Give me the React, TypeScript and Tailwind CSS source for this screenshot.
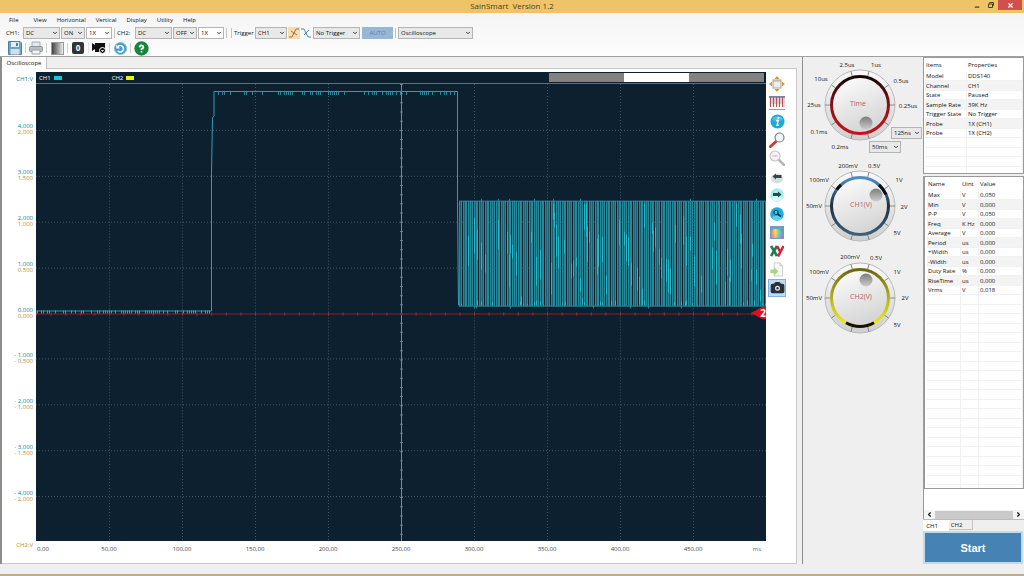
import { useState } from 'react';
import type { ReactNode } from 'react';
import {
  Camera,
  ChevronDown,
  ChevronLeft,
  ChevronRight,
  CircleHelp,
  Minus,
  X,
} from 'lucide-react';

const MENU = ['File', 'View', 'Horizontal', 'Vertical', 'Display', 'Utility', 'Help'];

const ITEMS = [
  ['Model', 'DDS140'],
  ['Channel', 'CH1'],
  ['State', 'Paused'],
  ['Sample Rate', '39K Hz'],
  ['Trigger State', 'No Trigger'],
  ['Probe', '1X (CH1)'],
  ['Probe', '1X (CH2)'],
];

const MEASUREMENTS = [
  ['Max', 'V', '0,050'],
  ['Min', 'V', '0,000'],
  ['P-P', 'V', '0,050'],
  ['Freq', 'K Hz', '0,000'],
  ['Average', 'V', '0,000'],
  ['Period', 'us', '0,000'],
  ['+Width', 'us', '0,000'],
  ['-Width', 'us', '0,000'],
  ['Duty Rate', '%', '0,000'],
  ['RiseTime', 'us', '0,000'],
  ['Vrms', 'V', '0,018'],
];

const Y_LABELS = [
  ['4,000', '2,000'],
  ['3,000', '1,500'],
  ['2,000', '1,000'],
  ['1,000', '0,500'],
  ['0,000', '0,000'],
  ['- 1,000', '- 0,500'],
  ['- 2,000', '- 1,000'],
  ['- 3,000', '- 1,500'],
  ['- 4,000', '- 2,000'],
];

const X_LABELS = ['50,00', '100,00', '150,00', '200,00', '250,00', '300,00', '350,00', '400,00', '450,00'];

interface DropdownProps {
  label: string;
  options: string[];
  className: string;
  white?: boolean;
}

function Dropdown({ label, options, className, white }: DropdownProps) {
  return (
    <div className={`relative h-3 ${className}`}>
      <select
        aria-label={label}
        className={`block h-full w-full appearance-none border border-[#b4b4b4] pl-[2px] text-[6px] leading-[10px] text-[#111] ${
          white ? 'bg-white' : 'bg-[#e8e8e8]'
        }`}
      >
        {options.map((o) => (
          <option key={o}>{o}</option>
        ))}
      </select>
      <ChevronDown className="pointer-events-none absolute top-[3px] right-[2px] h-[6px] w-[6px] text-[#333]" strokeWidth={4} />
    </div>
  );
}

function Separator() {
  return <span className="mx-[2px] h-[10px] w-px bg-[#c4c4c4]" />;
}

function ToolButton({ label, children }: { label: string; children: ReactNode }) {
  return (
    <button aria-label={label} className="flex h-4 w-[18px] items-center justify-center">
      {children}
    </button>
  );
}

// Small deterministic generator so the noise is stable between renders
function makeRandom(seed: number) {
  let s = seed;
  return () => {
    s = (s * 16807) % 2147483647;
    return s / 2147483647;
  };
}

function buildBurst() {
  const rnd = makeRandom(42);
  const base: string[] = [];
  const mid: string[] = [];
  const bright: string[] = [];
  for (let x = 423; x < 730; x += 1) {
    const step = (x - 423) % 11;
    const top = rnd() > 0.96 ? 115 : 117;
    const bottom = rnd() > 0.98 ? 225 : 223;
    // gaps between the pulses, the narrow ones only partly dark
    if (step === 3 || step === 8) continue;
    if (step === 1 || step === 5 || step === 10) {
      mid.push(`M${x}.5 117V223`);
      continue;
    }
    base.push(`M${x}.5 ${top}V${bottom}`);
    const phase = ((x - 427) % 30) / 30;
    if (rnd() > 0.5) {
      const y = 122 + phase * 78 + (rnd() - 0.5) * 40;
      const len = 8 + rnd() * 28;
      bright.push(`M${x}.5 ${Math.max(120, y).toFixed(0)}V${Math.min(221, y + len).toFixed(0)}`);
    }
    if (rnd() > 0.8) bright.push(`M${x}.5 ${217 + Math.round(rnd() * 3)}V222`);
  }
  return { base: base.join(''), mid: mid.join(''), bright: bright.join('') };
}

function buildTicks(from: number, to: number, y: number, len: number, density: number) {
  const rnd = makeRandom(7);
  let d = '';
  for (let x = from; x < to; x += 2) {
    if (rnd() < density) d += `M${x}.5 ${y}v${len}`;
  }
  return d;
}

const burst = buildBurst();
const plateauNoise = buildTicks(182, 420, 8, 3, 0.45);
const zeroNoise = buildTicks(1, 175, 227, 3, 0.6);

function ScopePlot() {
  return (
    <svg viewBox="0 0 730 458" preserveAspectRatio="none" className="block h-full w-full" aria-label="Waveform">
      <g stroke="#44545f" strokeWidth="1" strokeDasharray="1 2">
        {[1, 2, 3, 4, 6, 7, 8, 9].map((i) => (
          <path key={`v${i}`} d={`M${i * 73}.5 0V458`} />
        ))}
        {[46, 92, 138, 184, 275, 321, 367, 413].map((y) => (
          <path key={`h${y}`} d={`M0 ${y}.5H730`} />
        ))}
      </g>
      <path d="M365.5 0V458" stroke="#66737d" strokeWidth="3" strokeDasharray="1 8.2" />
      <path d="M365.5 0V458" stroke="#7f8b93" />
      <path d="M0 230.5H730" stroke="#80474f" strokeWidth="3" strokeDasharray="1 13.6" />
      <path d="M0 230.5H730" stroke="#a3171f" />
      <path d={zeroNoise} stroke="#3aa0b2" />
      <path d="M0 227.5H175.5V90L176.500 34L178 32V7.500H421.500V118L422.500 222" fill="none" stroke="#2f9fb2" />
      <path d={plateauNoise} stroke="#2a8a9c" />
      <path d={burst.base} stroke="#26899a" />
      <path d={burst.mid} stroke="#1a5f70" />
      <path d={burst.bright} stroke="#24b8c8" />
      <path d="M423 117.500H730M423 222.500H730" stroke="#238898" />
    </svg>
  );
}

interface DialLabel {
  text: string;
  x: number;
  y: number;
}

interface DialProps {
  id: string;
  title: string;
  labels: DialLabel[];
  dot: [number, number];
  ring: [string, string, string];
  arc?: { d: string; color: string };
}

function Dial({ id, title, labels, dot, ring, arc }: DialProps) {
  const ticks = [15, 55, 90, 125, 165, 195, 235, 270, 305, 345];
  return (
    <svg viewBox="1 2 120 92" className="block h-[92px] w-[120px] overflow-visible" role="img" aria-label={title}>
      <defs>
        <linearGradient id={`${id}-ring`} x1="0" y1="0" x2="0" y2="1">
          <stop offset="0" stopColor={ring[0]} />
          <stop offset="0.5" stopColor={ring[1]} />
          <stop offset="1" stopColor={ring[2]} />
        </linearGradient>
        <linearGradient id={`${id}-face`} x1="0" y1="0" x2="0.4" y2="1">
          <stop offset="0" stopColor="#ffffff" />
          <stop offset="1" stopColor="#d6d6d6" />
        </linearGradient>
        <linearGradient id={`${id}-rim`} x1="0" y1="0" x2="0" y2="1">
          <stop offset="0" stopColor="#fafafa" />
          <stop offset="1" stopColor="#cfcfcf" />
        </linearGradient>
        <linearGradient id={`${id}-dot`} x1="0" y1="0" x2="0" y2="1">
          <stop offset="0" stopColor="#7c7c7c" />
          <stop offset="1" stopColor="#cccccc" />
        </linearGradient>
      </defs>
      <circle cx="58" cy="50" r="35" fill={`url(#${id}-rim)`} stroke="#b9b9b9" />
      {ticks.map((a) => (
        <path key={a} d="M58 15V20" stroke="#777" strokeWidth="0.8" transform={`rotate(${a} 58 50)`} />
      ))}
      <circle cx="58" cy="50" r="28.500" fill={`url(#${id}-face)`} stroke={`url(#${id}-ring)`} strokeWidth="3" />
      {arc && <path d={arc.d} fill="none" stroke={arc.color} strokeWidth="3" />}
      <circle cx={dot[0]} cy={dot[1]} r="6.500" fill={`url(#${id}-dot)`} />
      <text x={id === 'time' ? 56 : 59} y="51" textAnchor="middle" fontSize="7" fill="#b5605c">
        {title}
      </text>
      {labels.map((l) => (
        <text key={l.text} x={l.x} y={l.y} textAnchor="middle" fontSize="6" fill="#111">
          {l.text}
        </text>
      ))}
    </svg>
  );
}

const TIME_LABELS: DialLabel[] = [
  { text: '2.5us', x: 45, y: 12 },
  { text: '1us', x: 74, y: 12 },
  { text: '10us', x: 19, y: 26 },
  { text: '0.5us', x: 99, y: 28 },
  { text: '25us', x: 12, y: 52 },
  { text: '0.25us', x: 106, y: 53 },
  { text: '0.1ms', x: 17, y: 79 },
  { text: '0.2ms', x: 38, y: 94 },
];

const CH1_LABELS: DialLabel[] = [
  { text: '200mV', x: 46, y: 12 },
  { text: '0.5V', x: 72, y: 12 },
  { text: '100mV', x: 17, y: 26 },
  { text: '1V', x: 97, y: 26 },
  { text: '50mV', x: 12, y: 52 },
  { text: '2V', x: 102, y: 53 },
  { text: '5V', x: 95, y: 79 },
];

const CH2_LABELS: DialLabel[] = [
  { text: '200mV', x: 48, y: 11 },
  { text: '0.5V', x: 74, y: 12 },
  { text: '100mV', x: 17, y: 26 },
  { text: '1V', x: 95, y: 26 },
  { text: '50mV', x: 12, y: 52 },
  { text: '2V', x: 103, y: 52 },
  { text: '5V', x: 95, y: 79 },
];

function SideTools() {
  const tools: { label: string; icon: ReactNode }[] = [
    {
      label: 'Fit to window',
      icon: (
        <svg viewBox="0 0 16 16" className="h-4 w-4">
          <path d="M8 0l2.500 3h-5zM8 16l2.500-3h-5zM0 8l3-2.500v5zM16 8l-3-2.500v5z" fill="#d39a3c" />
          <rect x="4" y="4" width="8" height="8" fill="#eceef4" stroke="#a9a39a" />
          <path d="M4 5h8" stroke="#c9a878" />
        </svg>
      ),
    },
    {
      label: 'Persistence',
      icon: (
        <svg viewBox="0 0 16 14" className="h-[14px] w-4">
          <path d="M0 1h16" stroke="#4b5a92" strokeWidth="1.500" />
          <path d="M1.500 1v10M4.500 1v10M7.500 1v10M10.500 1v10M13.500 1v10" stroke="#b3565c" strokeWidth="1.200" />
          <path d="M3 1v7M6 1v7M9 1v7M12 1v7M15 1v10" stroke="#c9a2a8" />
          <path d="M0 13.500h16" stroke="#999" />
        </svg>
      ),
    },
    {
      label: 'Information',
      icon: (
        <svg viewBox="0 0 16 16" className="h-[15px] w-[15px]">
          <circle cx="8" cy="8" r="7.500" fill="#1fa9d4" />
          <path d="M2 6a6.500 5.500 0 0 1 12 0q-6 3-12 0z" fill="#7bdcf2" opacity="0.5" />
          <circle cx="9" cy="4" r="1.200" fill="#fff" />
          <path d="M6.500 7h2.300l-1.300 5h2" fill="none" stroke="#fff" strokeWidth="1.500" />
        </svg>
      ),
    },
    {
      label: 'Zoom in',
      icon: (
        <svg viewBox="0 0 16 16" className="h-4 w-4">
          <path d="M1.500 14.500l5.500-5" stroke="#c5402f" strokeWidth="3" strokeLinecap="round" />
          <circle cx="10.500" cy="5.500" r="4.500" fill="#eef5f8" stroke="#7b8185" strokeWidth="1.200" />
        </svg>
      ),
    },
    {
      label: 'Zoom out',
      icon: (
        <svg viewBox="0 0 16 16" className="h-4 w-4">
          <path d="M10 10l5 5" stroke="#b5b5b5" strokeWidth="2.500" strokeLinecap="round" />
          <circle cx="6" cy="6" r="5" fill="#f6f2f6" stroke="#c9c2c9" strokeWidth="1.200" />
          <path d="M3.500 6h5" stroke="#c9b2c2" />
        </svg>
      ),
    },
    {
      label: 'Previous',
      icon: (
        <svg viewBox="0 0 14 14" className="h-[14px] w-[14px]">
          <ellipse cx="7" cy="8.500" rx="6" ry="5" fill="#d3e0df" />
          <path d="M2.500 6.500L6 3.500v1.500h5.500v3H6v1.500z" fill="#3d4345" />
        </svg>
      ),
    },
    {
      label: 'Next',
      icon: (
        <svg viewBox="0 0 14 14" className="h-[14px] w-[14px]">
          <circle cx="7" cy="7" r="6.800" fill="#a5ecec" />
          <ellipse cx="7" cy="10.500" rx="5" ry="3" fill="#d8f8f4" />
          <path d="M11.500 6.500L8 3.500v1.500H3v3h5v1.500z" fill="#27494c" />
        </svg>
      ),
    },
    {
      label: 'Search',
      icon: (
        <svg viewBox="0 0 14 14" className="h-[14px] w-[14px]">
          <circle cx="7" cy="7" r="6.800" fill="#21aedb" />
          <ellipse cx="7" cy="11" rx="4.500" ry="2.200" fill="#55d4f2" />
          <circle cx="6" cy="5.500" r="2" fill="#5fd0ee" stroke="#0b3d5c" strokeWidth="1.200" />
          <path d="M7.500 7L11 9.500" stroke="#0b3d5c" strokeWidth="1.600" />
        </svg>
      ),
    },
    {
      label: 'Colors',
      icon: (
        <svg viewBox="0 0 14 13" className="h-[13px] w-[14px]">
          <defs>
            <linearGradient id="hue">
              <stop offset="0" stopColor="#ff5a4a" />
              <stop offset="0.35" stopColor="#ffe04a" />
              <stop offset="0.65" stopColor="#4ae07a" />
              <stop offset="1" stopColor="#5a7aff" />
            </linearGradient>
            <linearGradient id="hue-fade" x1="0" y1="0" x2="0" y2="1">
              <stop offset="0" stopColor="#ffffff" stopOpacity="0" />
              <stop offset="1" stopColor="#ff60d0" stopOpacity="0.4" />
            </linearGradient>
          </defs>
          <rect width="14" height="13" fill="#6e9cc4" />
          <rect x="1" y="3" width="12" height="9" fill="url(#hue)" />
          <rect x="1" y="3" width="12" height="9" fill="url(#hue-fade)" />
        </svg>
      ),
    },
    {
      label: 'XY mode',
      icon: (
        <svg viewBox="0 0 14 12" className="h-3 w-[14px]">
          <path d="M1 1l6 10M7 1L1 11" stroke="#1f7a55" strokeWidth="2.600" />
          <path d="M7 1l3 5.500M13.500 1L8 11.500" stroke="#d8232f" strokeWidth="2.600" />
        </svg>
      ),
    },
    {
      label: 'Export',
      icon: (
        <svg viewBox="0 0 14 16" className="h-[15px] w-[14px]">
          <path d="M4 1h6l3 3v11H4z" fill="#f7f7f7" stroke="#cccccc" />
          <path d="M10 1v3h3" fill="none" stroke="#cccccc" />
          <path d="M0 8h4V5.500l4.500 4.500-4.500 4.500V12H0z" fill="#a9d67c" />
        </svg>
      ),
    },
  ];
  return (
    <div className="flex h-[222px] flex-col items-center justify-between">
      {tools.map((t) => (
        <button key={t.label} aria-label={t.label} className="flex h-[18px] w-[18px] items-center justify-center">
          {t.icon}
        </button>
      ))}
      <button
        aria-label="Snapshot"
        className="flex h-[18px] w-[18px] items-center justify-center border border-[#7fb2de] bg-[#bcdcf5]"
      >
        <Camera className="h-[15px] w-[15px] fill-[#2b3036] text-[#2b3036] [&>circle]:fill-[#2b3036] [&>circle]:stroke-[#dfeefa]" />
      </button>
    </div>
  );
}

function TitleBar() {
  return (
    <header className="flex h-[13px] shrink-0 items-start bg-[#efc468] text-[#4c3c1c]">
      <div className="flex-1" />
      <h1 className="text-[8px] leading-3 whitespace-pre">SainSmart{'  '}Version 1.2</h1>
      <div className="flex flex-1 justify-end">
        <button aria-label="Minimize" className="flex h-[11px] w-[14px] items-center justify-center pt-[2px]">
          <Minus className="h-[6px] w-[6px]" strokeWidth={5} />
        </button>
        <button aria-label="Restore" className="flex h-[10px] w-[14px] items-center justify-center">
          <svg viewBox="0 0 6 6" className="h-[6px] w-[6px]">
            <path d="M1.500 1.500V.5h4v3h-1M.5 2h4v3.500h-4z" fill="none" stroke="currentColor" />
          </svg>
        </button>
        <button aria-label="Close" className="mr-[2px] flex h-[10px] w-[24px] items-center justify-center bg-[#d0504e] text-white">
          <X className="h-[7px] w-[7px]" strokeWidth={4} />
        </button>
      </div>
    </header>
  );
}

function Toolbars() {
  return (
    <div className="shrink-0 bg-linear-to-b from-[#f4f4f4] to-[#fdfdfd]">
      <nav className="flex h-[13px] items-center gap-[10px] pl-[9px]">
        {MENU.map((m) => (
          <button key={m} className="first:mr-[5px]">
            {m}
          </button>
        ))}
      </nav>
      <div className="flex h-[14px] items-center">
        <span className="w-[17px] pl-[6px] whitespace-nowrap">CH1:</span>
        <Dropdown label="CH1 coupling" options={['DC', 'AC']} className="ml-[6px] w-[37px]" />
        <Dropdown label="CH1 enabled" options={['ON', 'OFF']} className="ml-px w-[24px]" />
        <Dropdown label="CH1 probe" options={['1X', '10X']} className="ml-px w-[26px]" white />
        <Separator />
        <span className="w-[18px] whitespace-nowrap">CH2:</span>
        <Dropdown label="CH2 coupling" options={['DC', 'AC']} className="w-[37px]" />
        <Dropdown label="CH2 enabled" options={['OFF', 'ON']} className="ml-px w-[24px]" />
        <Dropdown label="CH2 probe" options={['1X', '10X']} className="ml-px w-[26px]" white />
        <Separator />
        <Separator />
        <span className="w-[21px]">Trigger</span>
        <Dropdown label="Trigger source" options={['CH1', 'CH2']} className="w-[32px]" />
        <button aria-label="Rising edge" className="ml-px flex h-3 w-3 items-center justify-center bg-[#fbdcae]">
          <svg viewBox="0 0 10 10" className="h-[10px] w-[10px]">
            <path d="M0 9h3l4-8h3M2 3l6 4" fill="none" stroke="#8a7658" />
          </svg>
        </button>
        <button aria-label="Falling edge" className="flex h-3 w-3 items-center justify-center">
          <svg viewBox="0 0 10 10" className="h-[10px] w-[10px]">
            <path d="M0 1h3l4 8h3M3 7l5-5" fill="none" stroke="#3d8fb5" />
          </svg>
        </button>
        <Dropdown label="Trigger mode" options={['No Trigger', 'Edge']} className="ml-px w-[47px]" />
        <button disabled className="ml-[2px] h-3 w-[31px] bg-[#98b6d6] text-[#647f9c]">
          AUTO
        </button>
        <Separator />
        <Dropdown label="Instrument" options={['Oscilloscope', 'Spectrum']} className="w-[75px]" />
      </div>
      <div className="flex h-4 items-center gap-px pl-[6px]">
        <ToolButton label="Save">
          <svg viewBox="0 0 14 14" className="h-[14px] w-[14px]">
            <path d="M.5.500H12L13.500 2v11.500H.5z" fill="#6fa3c4" stroke="#4b82a5" />
            <rect x="3" y="1" width="8" height="5" fill="#e4edf3" />
            <rect x="2.500" y="8" width="9" height="5.500" fill="#cfe0ea" />
            <rect x="8" y="2" width="2" height="3" fill="#4c7f9f" />
          </svg>
        </ToolButton>
        <span className="h-[10px] w-px bg-[#d0d0d0]" />
        <ToolButton label="Print">
          <svg viewBox="0 0 14 14" className="h-[14px] w-[14px]">
            <path d="M3 1h8v5H3z" fill="#dfeaf5" stroke="#a4acb5" />
            <rect x="0.500" y="5.500" width="13" height="5" rx="1" fill="#b9bec4" stroke="#8d939a" />
            <path d="M3 9h8v4H3z" fill="#f4f4f4" stroke="#9aa0a6" />
          </svg>
        </ToolButton>
        <span className="h-[10px] w-px bg-[#d0d0d0]" />
        <ToolButton label="Gradient">
          <span className="h-[13px] w-[13px] border border-[#999] bg-linear-to-r from-[#444] to-[#eee]" />
        </ToolButton>
        <span className="h-[10px] w-px bg-[#d0d0d0]" />
        <ToolButton label="Zero">
          <span className="flex h-3 w-3 items-center justify-center rounded-[2px] bg-[#333] text-[8px] font-bold text-white">
            0
          </span>
        </ToolButton>
        <span className="h-[10px] w-px bg-[#e4e4e4]" />
        <ToolButton label="Record">
          <svg viewBox="0 0 14 12" className="h-3 w-[14px]">
            <path d="M0 1l3 2V1h10v9H3V7L0 9z" fill="#111" />
            <circle cx="10.500" cy="8.500" r="3" fill="#111" stroke="#fff" />
            <path d="M9 8h3l-1.500 2z" fill="#fff" />
          </svg>
        </ToolButton>
        <span className="h-[10px] w-px bg-[#d0d0d0]" />
        <ToolButton label="Refresh">
          <svg viewBox="0 0 14 14" className="h-[13px] w-[13px]">
            <circle cx="7" cy="7" r="6.500" fill="#3f9fd2" stroke="#8cb9d2" />
            <path d="M4 9.500a3.500 3.500 0 1 0 0-4.500" fill="none" stroke="#fff" strokeWidth="1.700" />
            <path d="M2.500 3v4h4z" fill="#fff" />
          </svg>
        </ToolButton>
        <span className="h-[10px] w-px bg-[#d0d0d0]" />
        <ToolButton label="Help">
          <CircleHelp className="h-[15px] w-[15px] fill-[#16873a] text-white [&>circle]:stroke-[#16873a]" strokeWidth={3} />
        </ToolButton>
      </div>
    </div>
  );
}

function ScopePane() {
  return (
    <main className="flex min-w-0 flex-1 flex-col border-l-2 border-[#8d8d8d] bg-[#efefef] pr-[5px]">
      <div className="flex h-3 shrink-0 border-b border-[#c9c9c9]">
        <button className="h-3 w-[45px] border-r border-[#c0c0c0] bg-white">Oscilloscope</button>
      </div>
      <div className="flex min-h-0 flex-1 border-r border-b border-[#c9c9c9] bg-white pt-[3px]">
        <div className="flex w-[34px] shrink-0 flex-col pr-[3px] pb-[15px] text-right leading-[6px] text-[#0f8297]">
          <span className="h-[17px] pt-[4px]">CH1:V</span>
          {Y_LABELS.map(([a, b]) => (
            <div key={a} className="flex flex-1 flex-col justify-end">
              <span>{a}</span>
              <span className="text-[#b98a35]">{b}</span>
            </div>
          ))}
          <div className="flex flex-1 flex-col justify-end text-[#b98a35]">CH2:V</div>
        </div>
        <div className="flex min-w-0 flex-1 flex-col">
          <div className="relative flex min-h-0 flex-1 flex-col bg-[#0d2030]">
            <div className="flex h-3 shrink-0 items-center border-b border-[#5f6f7a] pl-[3px] text-white">
              <span>CH1</span>
              <span className="ml-[3px] h-1 w-2 bg-[#17c6dc]" />
              <span className="ml-[50px]">CH2</span>
              <span className="ml-[3px] h-1 w-2 bg-[#f1f10e]" />
              <div className="mr-[2px] ml-auto flex h-[9px] w-[215px] justify-center bg-[#828282]">
                <div className="h-full w-[30%] bg-white" />
              </div>
            </div>
            <div className="min-h-0 flex-1">
              <ScopePlot />
            </div>
            <div className="absolute top-[235px] right-0 flex h-3 items-center">
              <svg viewBox="0 0 15 12" className="h-3 w-[15px]">
                <path d="M0 6L11 0h4v12h-4z" fill="#e01018" />
              </svg>
              <span className="absolute right-0 text-[10px] leading-3 font-bold text-white">2</span>
            </div>
          </div>
          <div className="flex h-[22px] shrink-0 pt-[4px] leading-[8px] text-[#444]">
            <span className="w-[5%] pl-[1px]">0,00</span>
            {X_LABELS.map((x) => (
              <span key={x} className="w-[10%] text-center">
                {x}
              </span>
            ))}
            <span className="w-[5%] pr-[5px] text-right text-[#0f8297]">ms</span>
          </div>
        </div>
        <div className="w-[30px] shrink-0 pt-[3px] pl-[2px]">
          <div className="w-[18px]">
            <SideTools />
          </div>
        </div>
      </div>
    </main>
  );
}

function DialPane() {
  return (
    <section className="w-[121px] shrink-0 border-l border-[#8d8d8d] bg-[#efefef]">
      <div className="relative pb-[9px]">
        <Dial
          id="time"
          title="Time"
          labels={TIME_LABELS}
          dot={[64, 68]}
          ring={['#140404', '#8c1018', '#c4141c']}
        />
        <div className="absolute top-[70px] right-px">
          <Dropdown label="Fast time base" options={['125ns', '50ns']} className="w-[31px]" />
        </div>
        <div className="absolute top-[84px] left-[66px]">
          <Dropdown label="Slow time base" options={['50ms', '100ms']} className="w-[32px]" />
        </div>
      </div>
      <Dial
        id="ch1"
        title="CH1(V)"
        labels={CH1_LABELS}
        dot={[74, 39]}
        ring={['#4f8fc4', '#1d2f40', '#3f6078']}
        arc={{ d: 'M34.700 33.700A28.500 28.500 0 0 1 39 28.800M77 28.800A28.500 28.500 0 0 1 84 38.500', color: '#0a0d10' }}
      />
      <Dial
        id="ch2"
        title="CH2(V)"
        labels={CH2_LABELS}
        dot={[64, 32]}
        ring={['#6b6714', '#b5b01c', '#f2f020']}
        arc={{ d: 'M44 74.800A28.500 28.500 0 0 0 72 74.800', color: '#111108' }}
      />
    </section>
  );
}

function DataTable({ head, rows, total, cols }: {
  head: string[];
  rows: string[][];
  total: number;
  cols: string[];
}) {
  const blank = Array.from({ length: total - rows.length }, () => head.map(() => '\u00a0'));
  return (
    <table className="w-full table-fixed border-separate border-spacing-0 text-left leading-[8px]">
      <thead>
        <tr className="h-[14px]">
          {head.map((h, i) => (
            <th key={h} className={`p-0 pl-px font-normal ${cols[i]}`}>
              {h}
            </th>
          ))}
        </tr>
      </thead>
      <tbody>
        {[...rows, ...blank].map((row, r) => (
          <tr key={r} className={`odd:h-[9px] even:h-[10px] ${r < rows.length ? 'even:bg-[#f3f3f3]' : ''}`}>
            {row.map((cell, i) => (
              <td
                key={i}
                className="overflow-hidden border-r border-b border-[#f1f1f1] p-0 pl-px whitespace-nowrap"
              >
                {cell}
              </td>
            ))}
          </tr>
        ))}
      </tbody>
    </table>
  );
}

function InfoPane() {
  const [channel, setChannel] = useState('CH1');
  const [running, setRunning] = useState(false);
  return (
    <aside className="flex w-[101px] shrink-0 flex-col bg-[#efefef]">
      <div className="h-[117px] shrink-0 overflow-hidden border border-[#9a9a9a] bg-white pl-[1px]">
        <DataTable head={['Items', 'Properties']} rows={ITEMS} total={12} cols={['w-[42px]', '']} />
      </div>
      <div className="mt-[2px] flex min-h-0 flex-1 flex-col border-l border-[#9a9a9a] bg-white">
        <div className="min-h-0 flex-1 overflow-hidden border border-[#9a9a9a] pl-[2px]">
          <DataTable
            head={['Name', 'Uint', 'Value']}
            rows={MEASUREMENTS}
            total={33}
            cols={['w-[34px]', 'w-[18px]', '']}
          />
        </div>
        <div className="mt-[21px] flex h-[9px] shrink-0 items-center justify-between bg-[#f4f4f4] px-[2px]">
          <ChevronLeft className="h-[7px] w-[7px]" strokeWidth={4} />
          <div className="mx-[2px] h-[8px] flex-1 bg-[#cacaca]" />
          <ChevronRight className="h-[7px] w-[7px]" strokeWidth={4} />
        </div>
      </div>
      <div className="flex h-3 shrink-0 items-start border-t border-[#bbb]">
        {['CH1', 'CH2'].map((c) => (
          <button
            key={c}
            onClick={() => setChannel(c)}
            className={
              channel === c
                ? 'h-[11px] w-[26px] bg-white pr-[8px]'
                : 'h-[10px] w-[24px] border-r border-b border-[#c4c4c4] bg-[#eeeeee] pr-[8px]'
            }
          >
            {c}
          </button>
        ))}
      </div>
      <button
        onClick={() => setRunning(!running)}
        className="mr-px h-[33px] shrink-0 border-2 border-[#bcdcf2] bg-[#4682b4] font-['Liberation_Sans'] text-[11px] font-bold text-white"
      >
        {running ? 'Stop' : 'Start'}
      </button>
    </aside>
  );
}

export default function App() {
  return (
    <div className="flex h-screen flex-col overflow-hidden bg-[#efefef] font-['Open_Sans','Noto_Sans',sans-serif] text-[6px] leading-[8px] text-[#111]">
      <TitleBar />
      <Toolbars />
      <div className="flex min-h-0 flex-1 border-t border-[#a0a0a0]">
        <ScopePane />
        <DialPane />
        <InfoPane />
      </div>
      <footer className="h-3 shrink-0 border-b-2 border-[#c0ab8a] bg-[#efefef]" />
    </div>
  );
}
